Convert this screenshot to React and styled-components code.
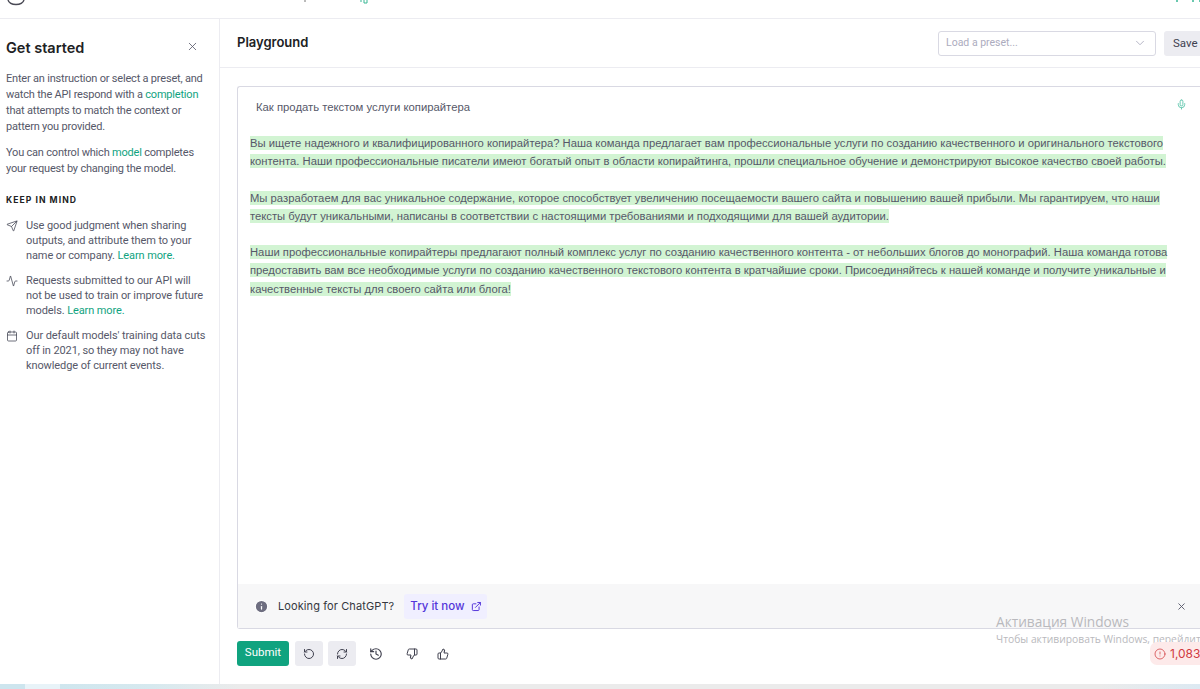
import React from "react";
import styled, { createGlobalStyle } from "styled-components";
import { X, ChevronDown, Mic, Info, ExternalLink, RotateCcw, RefreshCw, History, ThumbsDown, ThumbsUp, Send, Activity, Calendar, CircleAlert } from "lucide-react";

const Global = createGlobalStyle`
  html, body { margin: 0; padding: 0; background: #fff; height: 100%; overflow: hidden; }
  * { box-sizing: border-box; }
  body { font-family: Inter, "Liberation Sans", sans-serif; color: #353740; }
`;

const Page = styled.div`
  position: relative;
  width: 1200px;
  height: 689px;
  overflow: hidden;
  display: flex;
  flex-direction: column;
`;

const TopBar = styled.header`
  height: 19px;
  flex: none;
  border-bottom: 1px solid #ececf1;
  display: flex;
  align-items: flex-start;
  padding-left: 6px;
  overflow: hidden;
`;

const TopMarks = styled.svg`
  display: block;
  flex: none;
`;

const Body = styled.div`
  flex: 1;
  min-height: 0;
  display: flex;
`;

const Side = styled.aside`
  width: 220px;
  flex: none;
  border-right: 1px solid #ececf1;
  padding: 19px 0 0 6px;
`;

const SideHead = styled.div`
  display: flex;
  align-items: center;
  justify-content: space-between;
  padding-right: 20px;
  height: 20px;
  margin-bottom: 13px;
  & svg { margin-top: -3px; }
`;

const SideTitle = styled.h2`
  margin: 0;
  font-size: 14.5px;
  line-height: 20px;
  font-weight: 600;
  color: #202123;
`;

const Para = styled.p`
  margin: 0 0 10px;
  width: 210px;
  font-family: Roboto, sans-serif;
  font-size: 11px;
  letter-spacing: -0.2px;
  line-height: 16px;
  color: #565869;
  white-space: nowrap;
`;

const Link = styled.span`
  color: #10a37f;
`;

const Keep = styled.h3`
  margin: 16px 0 11px;
  font-size: 8.6px;
  line-height: 14px;
  letter-spacing: 1.05px;
  font-weight: 700;
  color: #202123;
`;

const Tip = styled.div`
  display: flex;
  gap: 8px;
  margin-bottom: 10px;
  font-family: Roboto, sans-serif;
  font-size: 11px;
  letter-spacing: -0.1px;
  line-height: 15px;
  color: #565869;
  white-space: nowrap;
  & svg { flex: none; margin-top: 2px; color: #3f4150; }
`;

const Main = styled.main`
  width: 988px;
  flex: none;
  display: flex;
  flex-direction: column;
`;

const MainHead = styled.div`
  height: 49px;
  flex: none;
  border-bottom: 1px solid #ececf1;
  display: flex;
  align-items: center;
  padding: 0 2px 0 17px;
  margin-bottom: 18px;
`;

const PageTitle = styled.h1`
  margin: 0 auto 2px 0;
  font-size: 13px;
  line-height: 18px;
  font-weight: 600;
  color: #202123;
`;

const Preset = styled.div`
  width: 218px;
  height: 25px;
  border: 1px solid #d9d9e3;
  border-radius: 3px;
  display: flex;
  align-items: center;
  justify-content: space-between;
  padding: 0 8px 1px 7px;
  font-family: Roboto, sans-serif;
  font-size: 10.5px;
  color: #acacbe;
  margin-right: 8px;
`;

const Save = styled.div`
  width: 42px;
  height: 25px;
  border-radius: 3px;
  background: #ececf1;
  font-family: Roboto, sans-serif;
  font-size: 11.5px;
  line-height: 24px;
  padding-left: 9px;
  color: #40414f;
`;

const Editor = styled.section`
  margin-left: 17px;
  height: 543px;
  flex: none;
  border: 1px solid #d9d9e3;
  border-right: 0;
  border-radius: 3px 0 0 3px;
  display: flex;
  flex-direction: column;
`;

const EditorBody = styled.div`
  position: relative;
  flex: 1;
  min-height: 0;
  padding: 12px 12px 0;
`;

const MicSlot = styled.span`
  position: absolute;
  top: 12px;
  right: 21px;
  color: #5cc5ab;
  line-height: 0;
`;

const Prompt = styled.div`
  padding-left: 6px;
  font-size: 11.3px;
  line-height: 16px;
  color: #565869;
  margin-bottom: 19px;
  font-family: "Liberation Sans", Arial, sans-serif;
`;

const Paragraph = styled.div`
  margin-bottom: 18.2px;
`;

const Line = styled.div`
  font-family: "Liberation Sans", Arial, sans-serif;
  font-size: 11.25px;
  line-height: 18.2px;
  color: #565869;
  white-space: nowrap;
`;

const Mark = styled.span`
  background: #d2f4d3;
  padding: 1px 0;
`;

const Notice = styled.div`
  height: 44px;
  flex: none;
  background: #f7f7f8;
  display: flex;
  align-items: center;
  padding: 0 21px 0 16px;
  font-size: 11px;
  color: #353740;
  & > svg:first-child { color: #fff; fill: #6e6e80; }
`;

const NoticeText = styled.span`
  margin-left: 9px;
  letter-spacing: 0.1px;
  white-space: nowrap;
`;

const TryIt = styled.span`
  margin-left: 10px;
  margin-right: auto;
  width: 83px;
  height: 25px;
  padding: 0 6px;
  display: inline-flex;
  align-items: center;
  gap: 6px;
  border-radius: 3px;
  background: #f0efff;
  color: #5436da;
  font-size: 11.5px;
  font-weight: 500;
  white-space: nowrap;
`;

const Actions = styled.div`
  margin: 12px 0 0 17px;
  display: flex;
  align-items: center;
`;

const Submit = styled.div`
  width: 52px;
  height: 25px;
  border-radius: 3px;
  background: #10a37f;
  color: #fff;
  font-family: Roboto, sans-serif;
  font-size: 11.5px;
  line-height: 23px;
  text-align: center;
  margin-right: 6px;
`;

const IconBtn = styled.div`
  width: ${p => p.$w || 28}px;
  height: 25px;
  border-radius: 3px;
  background: ${p => (p.$filled ? "#ececf1" : "transparent")};
  margin-right: ${p => p.$gap ?? 5}px;
  display: flex;
  align-items: center;
  justify-content: center;
  color: #40414f;
`;

const Bottom = styled.div`
  height: 5px;
  flex: none;
  background: linear-gradient(90deg, #cde5ee 0, #cde5ee 25px, #e8f3f8 25px, #e8f3f8 60px, #cfe6ee 60px, #d6e9ef 150px, #ebebeb 240px, #ebebeb 1100px, #dce9f2 1200px);
`;

const Watermark = styled.div`
  position: absolute;
  left: 996px;
  top: 612px;
  color: #b9b9bd;
  font-family: "Open Sans", "Liberation Sans", sans-serif;
  white-space: nowrap;
`;

const WmTitle = styled.div`
  font-size: 13.7px;
  line-height: 20px;
`;

const WmSub = styled.div`
  font-size: 10.3px;
  line-height: 15px;
`;

const Credit = styled.div`
  position: absolute;
  left: 1150px;
  top: 642px;
  width: 60px;
  height: 23px;
  border-radius: 7px;
  background: #fdeaea;
  color: #d0393e;
  font-size: 12px;
  display: flex;
  align-items: center;
  gap: 4px;
  padding-left: 4px;
`;

const paragraphs = [
  [
    "Вы ищете надежного и квалифицированного копирайтера? Наша команда предлагает вам профессиональные услуги по созданию качественного и оригинального текстового",
    "контента. Наши профессиональные писатели имеют богатый опыт в области копирайтинга, прошли специальное обучение и демонстрируют высокое качество своей работы.",
  ],
  [
    "Мы разработаем для вас уникальное содержание, которое способствует увеличению посещаемости вашего сайта и повышению вашей прибыли. Мы гарантируем, что наши",
    "тексты будут уникальными, написаны в соответствии с настоящими требованиями и подходящими для вашей аудитории.",
  ],
  [
    "Наши профессиональные копирайтеры предлагают полный комплекс услуг по созданию качественного контента - от небольших блогов до монографий. Наша команда готова",
    "предоставить вам все необходимые услуги по созданию качественного текстового контента в кратчайшие сроки. Присоединяйтесь к нашей команде и получите уникальные и",
    "качественные тексты для своего сайта или блога!",
  ],
];

export default function App() {
  return (
    <Page>
      <Global />
      <TopBar>
        <TopMarks width="1194" height="6" viewBox="0 0 1194 6">
          <path d="M2 0c1 3 4 4.500 8 4.500s7-1.500 8-4.500" fill="none" stroke="#4a4a55" strokeWidth="1.400" />
          <path d="M299 0v2" stroke="#777" strokeWidth="1" />
          <path d="M355 0v2M358 0v3h3V0" fill="none" stroke="#3ab795" strokeWidth="1" />
          <path d="M1171 0v2M1187 0v2M1194 0v2" stroke="#3ab795" strokeWidth="1.500" />
        </TopMarks>
      </TopBar>
      <Body>
        <Side>
          <SideHead>
            <SideTitle>Get started</SideTitle>
            <X size={13} color="#565869" strokeWidth={1.500} />
          </SideHead>
          <Para>
            Enter an instruction or select a preset, and<br />
            watch the API respond with a <Link>completion</Link><br />
            that attempts to match the context or<br />
            pattern you provided.
          </Para>
          <Para>
            You can control which <Link>model</Link> completes<br />
            your request by changing the model.
          </Para>
          <Keep>KEEP IN MIND</Keep>
          <Tip>
            <Send size={12} strokeWidth={1.500} />
            <span>
              Use good judgment when sharing<br />
              outputs, and attribute them to your<br />
              name or company. <Link>Learn more.</Link>
            </span>
          </Tip>
          <Tip>
            <Activity size={12} strokeWidth={1.500} />
            <span>
              Requests submitted to our API will<br />
              not be used to train or improve future<br />
              models. <Link>Learn more.</Link>
            </span>
          </Tip>
          <Tip>
            <Calendar size={12} strokeWidth={1.500} />
            <span>
              Our default models' training data cuts<br />
              off in 2021, so they may not have<br />
              knowledge of current events.
            </span>
          </Tip>
        </Side>
        <Main>
          <MainHead>
            <PageTitle>Playground</PageTitle>
            <Preset>
              Load a preset...
              <ChevronDown size={14} color="#acacbe" strokeWidth={1.500} />
            </Preset>
            <Save>Save</Save>
          </MainHead>
          <Editor>
            <EditorBody>
              <MicSlot><Mic size={11} /></MicSlot>
              <Prompt>Как продать текстом услуги копирайтера</Prompt>
              {paragraphs.map((lines, i) => (
                <Paragraph key={i}>
                  {lines.map((l, j) => (
                    <Line key={j}><Mark>{l}</Mark></Line>
                  ))}
                </Paragraph>
              ))}
            </EditorBody>
            <Notice>
              <Info size={15} />
              <NoticeText>Looking for ChatGPT?</NoticeText>
              <TryIt>Try it now <ExternalLink size={11} strokeWidth={2.200} /></TryIt>
              <X size={11} color="#565869" strokeWidth={2} />
            </Notice>
          </Editor>
          <Actions>
            <Submit>Submit</Submit>
            <IconBtn $filled><RotateCcw size={12} /></IconBtn>
            <IconBtn $filled $gap={6}><RefreshCw size={12} /></IconBtn>
            <IconBtn $gap={8}><History size={14} /></IconBtn>
            <IconBtn $gap={3}><ThumbsDown size={12} /></IconBtn>
            <IconBtn><ThumbsUp size={12} /></IconBtn>
          </Actions>
        </Main>
      </Body>
      <Bottom />
      <Watermark>
        <WmTitle>Активация Windows</WmTitle>
        <WmSub>Чтобы активировать Windows, перейдите</WmSub>
      </Watermark>
      <Credit>
        <CircleAlert size={12} strokeWidth={1.500} />
        1,083
      </Credit>
    </Page>
  );
}
